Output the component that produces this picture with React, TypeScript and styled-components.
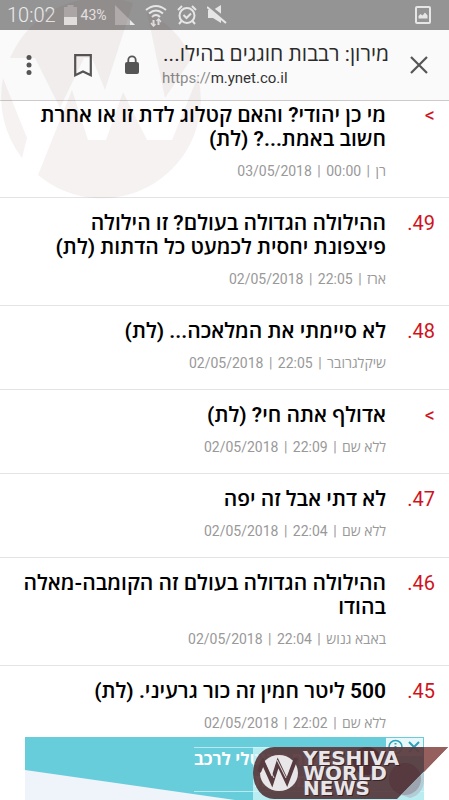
import React from "react";
import styled, { createGlobalStyle } from "styled-components";

const GlobalStyle = createGlobalStyle`
  * { box-sizing: border-box; }
  html, body { margin: 0; background: #fff; }
  body { font-family: Roboto, "Open Sans", "Noto Sans", sans-serif; }
  button { appearance: none; border: 0; background: none; padding: 0; margin: 0; font: inherit; color: inherit; }
`;

const Screen = styled.div`
  position: relative;
  height: 100vh;
  overflow: hidden;
  display: flex;
  flex-direction: column;
  background: #fff;
`;

const StatusBar = styled.header`
  flex: none;
  display: flex;
  align-items: center;
  height: 30px;
  padding: 0 18px 0 7px;
  background: #949494;
  color: #ececec;
`;
const Clock = styled.time`
  font-size: 20px;
  line-height: 30px;
  margin-right: 8px;
  font-weight: 300;
`;
const Percent = styled.span`
  font-size: 14px;
  margin: 0 8px 0 4px;
`;
const StatusIcons = styled.div`
  display: flex;
  align-items: center;
  gap: 10px;
  flex: 1;
`;

const Toolbar = styled.nav`
  flex: none;
  display: flex;
  align-items: center;
  height: 71px;
  padding: 0 20px 0 22px;
  background: #fafafa;
  border-bottom: 1px solid #cfcbcb;
  color: #555;
`;
const IconButton = styled.button<{ $gap: number }>`
  display: flex;
  margin-right: ${(p) => p.$gap}px;
`;
const Lock = styled.span`
  display: flex;
  margin-right: 23px;
`;
const PageInfo = styled.div`
  flex: 1;
  min-width: 0;
  margin-right: 20px;
`;
const PageTitle = styled.div`
  direction: rtl;
  font-size: 21px;
  line-height: 26px;
  color: #2b2b2b;
  white-space: nowrap;
`;
const Address = styled.div`
  font-size: 15px;
  line-height: 22px;
  color: #8b8b8b;
`;
const Host = styled.span`
  color: #333;
`;

const Comments = styled.main`
  flex: none;
  direction: rtl;
`;
const Row = styled.article`
  display: flex;
  padding: 13px 14px 14px;
  border-bottom: 1px solid #e4e4e4;
  &:first-child { padding-top: 2px; }
  &:last-child { border-bottom: 0; }
`;
const Marker = styled.span`
  flex: none;
  width: 49px;
  font-size: 20px;
  line-height: 24px;
  color: #d0131b;
`;
const Body = styled.div`
  flex: 1;
  min-width: 0;
`;
const Title = styled.h2`
  margin: 0 0 8px;
  font-size: 21px;
  line-height: 24px;
  font-weight: 600;
  color: #000;
`;
const Meta = styled.p`
  margin: 0;
  font-size: 14px;
  line-height: 24px;
  color: #999;
`;
const Divider = styled.span`
  padding: 0 2px;
`;

const Watermark = styled.svg`
  position: absolute;
  top: 0;
  left: 0;
  pointer-events: none;
`;

const Ad = styled.aside`
  position: absolute;
  left: 25px;
  right: 25px;
  bottom: 0;
  height: 63px;
  overflow: hidden;
  background: #68cddb;
`;
const AdArt = styled.svg`
  position: absolute;
  left: 0;
  top: 0;
`;
const AdText = styled.div`
  position: absolute;
  left: 169px;
  right: 0;
  top: 10px;
  height: 45px;
  border: solid #b9e9ef;
  border-width: 1px 0;
  direction: rtl;
  text-align: left;
  font-family: "Open Sans", sans-serif;
  font-size: 17px;
  line-height: 22px;
  font-weight: 700;
  color: #fff;
`;
const AdLine = styled.div<{ $indent?: boolean }>`
  padding-left: ${(p) => (p.$indent ? 60 : 0)}px;
`;
const AdControls = styled.div`
  position: absolute;
  right: 1px;
  top: 1px;
  display: flex;
  gap: 4px;
  padding: 1px 2px;
  background: #e8f7fa;
`;
const Brand = styled.div`
  position: absolute;
  right: 0;
  bottom: 0;
  width: 196px;
  height: 53px;
`;
const BrandShape = styled.svg`
  display: block;
`;
const BrandName = styled.div`
  position: absolute;
  left: 50px;
  top: 4px;
  font-family: "DejaVu Sans", sans-serif;
  font-size: 20px;
  line-height: 15px;
  font-weight: 700;
  color: #e8e6e8;
  text-shadow: 1px 1px 0 #3a2226;
`;

const comments = [
  { no: ">", title: "מי כן יהודי? והאם קטלוג לדת זו או אחרת חשוב באמת...? (לת)", author: "רן", time: "00:00", date: "03/05/2018" },
  { no: "49.", title: "ההילולה הגדולה בעולם? זו הילולה פיצפונת יחסית לכמעט כל הדתות (לת)", author: "ארז", time: "22:05", date: "02/05/2018" },
  { no: "48.", title: "לא סיימתי את המלאכה... (לת)", author: "שיקלגרובר", time: "22:05", date: "02/05/2018" },
  { no: ">", title: "אדולף אתה חי? (לת)", author: "ללא שם", time: "22:09", date: "02/05/2018" },
  { no: "47.", title: "לא דתי אבל זה יפה", author: "ללא שם", time: "22:04", date: "02/05/2018" },
  { no: "46.", title: "ההילולה הגדולה בעולם זה הקומבה-מאלה בהודו", author: "באבא גנוש", time: "22:04", date: "02/05/2018" },
  { no: "45.", title: "500 ליטר חמין זה כור גרעיני. (לת)", author: "ללא שם", time: "22:02", date: "02/05/2018" },
];

export default function App() {
  return (
    <Screen>
      <GlobalStyle />
      <StatusBar>
        <Clock>10:02</Clock>
        <svg width="13" height="20" viewBox="0 0 13 20">
          <path d="M3.5 0h6v2H13v18H0V2h3.5z" fill="#b0aeae" />
          <path d="M0 12h13v8H0z" fill="#e9e9e9" />
        </svg>
        <Percent>43%</Percent>
        <StatusIcons>
          <svg width="20" height="20" viewBox="0 0 20 20">
            <path d="M0 0v20h20z" fill="#b5b3b3" />
            <path d="M15 15v5h5z" fill="#e9e9e9" />
          </svg>
          <svg width="22" height="23" viewBox="0 0 22 23" fill="none" stroke="#e6e6e6" strokeWidth="2">
            <path d="M1 6Q11-2 21 6M4 9.500Q11 3.500 18 9.500M7 13Q11 9 15 13" />
            <path d="M8.500 22v-6M13.500 15v6" />
            <path d="M6 19l2.500 3 2-2M11.500 17l2-2 2.500 3" strokeWidth="1.500" />
          </svg>
          <svg width="20" height="20" viewBox="0 0 20 20" fill="none" stroke="#e6e6e6" strokeWidth="2">
            <circle cx="10" cy="10.500" r="7.500" />
            <path d="M1 5l4-4M15 1l4 4M6.500 10l3 3 4.500-4.500M4.500 16L2 19M15.500 16l2.500 3" />
          </svg>
          <svg width="20" height="20" viewBox="0 0 20 20">
            <path d="M1 5h5l8-5v18l-8-5H1z" fill="#e6e6e6" />
            <path d="M1 1l19 15" stroke="#949494" strokeWidth="4" />
            <path d="M0 2l19 16" stroke="#e6e6e6" strokeWidth="2" />
          </svg>
        </StatusIcons>
        <svg width="16" height="18" viewBox="0 0 16 18">
          <rect x="1" y="1" width="14" height="16" rx="1" fill="none" stroke="#e6e6e6" strokeWidth="2" />
          <path d="M3.500 12.500V10l2-2 2 1.500 2.500-3 2.500 3v3z" fill="#e6e6e6" />
        </svg>
      </StatusBar>

      <Toolbar>
        <IconButton $gap={38} aria-label="More options">
          <svg width="14" height="22" viewBox="0 0 14 22" fill="#555">
            <circle cx="7" cy="3.500" r="2.500" /><circle cx="7" cy="11" r="2.500" /><circle cx="7" cy="18.500" r="2.500" />
          </svg>
        </IconButton>
        <IconButton $gap={33} aria-label="Bookmark">
          <svg width="18" height="23" viewBox="0 0 18 23" fill="none" stroke="#555" strokeWidth="2.200">
            <path d="M1.200 1.200h15.600v20L9 17.500l-7.800 3.700z" />
          </svg>
        </IconButton>
        <Lock>
          <svg width="14" height="20" viewBox="0 0 14 20">
            <rect y="7" width="14" height="12" rx="2" fill="#555" />
            <path d="M3.300 8V5a3.700 3.700 0 0 1 7.400 0v3" fill="none" stroke="#555" strokeWidth="1.800" />
          </svg>
        </Lock>
        <PageInfo>
          <PageTitle>מירון: רבבות חוגגים בהילו...</PageTitle>
          <Address>https://<Host>m.ynet.co.il</Host></Address>
        </PageInfo>
        <IconButton $gap={0} aria-label="Close">
          <svg width="20" height="18" viewBox="0 0 20 18" stroke="#555" strokeWidth="2.200">
            <path d="M2 1l16 16M18 1L2 17" />
          </svg>
        </IconButton>
      </Toolbar>

      <Comments>
        {comments.map((c) => (
          <Row key={c.title}>
            <Marker>{c.no}</Marker>
            <Body>
              <Title>{c.title}</Title>
              <Meta>
                {c.author} <Divider>|</Divider> {c.time} <Divider>|</Divider> <bdi>{c.date}</bdi>
              </Meta>
            </Body>
          </Row>
        ))}
      </Comments>

      <Watermark width="201" height="200" viewBox="0 0 201 200" fill="#602020" fillOpacity="0.060">
        <path d="M10 58A99 99 0 0 1 133 3L116 56 105 90 92 58H84L60 108 35 58Z" />
        <path d="M147 12A99 99 0 0 1 192 58L165 98Z" />
        <path d="M3 78L27 138 22 158A99 99 0 0 1 3 78Z" />
        <path d="M38 175L72 90 88 140H106L123 92 147 140H172L198 76A99 99 0 0 1 38 175Z" />
      </Watermark>

      <Ad>
        <AdArt width="399" height="63" viewBox="0 0 399 63">
          <path d="M0 33L210 63H0z" fill="#eef4fa" />
        </AdArt>
        <AdText>
          <AdLine>ביטוח דיגיטלי לרכב</AdLine>
          <AdLine $indent>במהירות</AdLine>
        </AdText>
        <AdControls>
          <svg width="15" height="16" viewBox="0 0 15 16" fill="none" stroke="#2ba3bc" strokeWidth="1.500">
            <circle cx="7.500" cy="8" r="6.500" />
            <path d="M7.500 4v1.500M7.500 7v5" strokeWidth="2" />
          </svg>
          <svg width="14" height="16" viewBox="0 0 14 16" stroke="#2ba3bc" strokeWidth="2">
            <path d="M2 3l10 10M12 3L2 13" />
          </svg>
        </AdControls>
      </Ad>

      <Brand>
        <BrandShape width="196" height="53" viewBox="0 0 196 53">
          <path d="M0 0h171v53H0z" fill="#d4f7fa" fillOpacity="0.750" />
          <path d="M21 0h174l-51 52H21a21 26 0 0 1 0-52z" fill="#3c0a0e" fillOpacity="0.740" />
          <path d="M171 0h24l-24 25z" fill="#945f5c" />
          <circle cx="114" cy="14" r="14" fill="#42111b" fillOpacity="0.400" />
          <path d="M148 48l23-23v8a18 18 0 0 1-14 18z" fill="#b4ccd6" />
          <circle cx="152" cy="32" r="16" fill="#42111b" fillOpacity="0.200" />
          <ellipse cx="26" cy="26" rx="19" ry="18" fill="#e8e6e8" />
          <path d="M6 25l4-10 9 20 6-19 9 19 9-24" fill="none" stroke="#573b40" strokeWidth="4" />
          <path d="M13 15l8 16M24 13l9 18" fill="none" stroke="#e8e6e8" strokeWidth="1" />
        </BrandShape>
        <BrandName>YESHIVA<br />WORLD<br />NEWS</BrandName>
      </Brand>
    </Screen>
  );
}
